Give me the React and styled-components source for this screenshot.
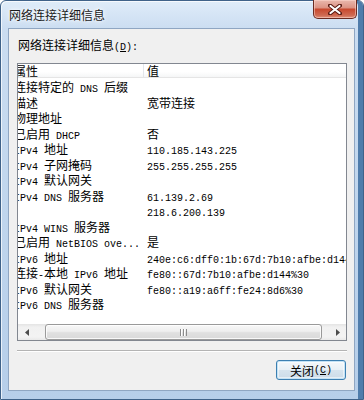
import React from "react";
import styled, { createGlobalStyle } from "styled-components";

const GlobalStyle = createGlobalStyle`
  html, body { margin: 0; padding: 0; background: #ffffff; }
  body { font-family: "Noto Sans CJK SC", "Noto Sans", sans-serif; color: #000; }
  * { box-sizing: border-box; }
`;

const Window = styled.div`
  width: 364px;
  height: 400px;
  display: flex;
  flex-direction: column;
  padding: 0 8px 9px 7px;
  border: 1px solid #3f6289;
  border-radius: 6px 6px 0 0;
  background: linear-gradient(180deg, #dfecf9 0%, #cbddf1 28px, #bfd5ed 55%, #b6cee9 100%);
  box-shadow: inset -5px 0 0 #4f7cab, inset 1px 1px 0 rgba(255,255,255,0.7);
`;

const TitleBar = styled.div`
  height: 27px;
  display: flex;
  justify-content: space-between;
  align-items: flex-start;
  flex-shrink: 0;
`;

const TitleText = styled.div`
  margin-top: 6px;
  margin-left: 1px;
  font-size: 12px;
  line-height: 16px;
  color: #1b1b1b;
  text-shadow: 0 0 6px #ffffff, 0 0 3px #ffffff;
`;

const CloseButton = styled.div`
  width: 44px;
  height: 19px;
  margin-top: -1px;
  margin-right: -2px;
  display: flex;
  align-items: center;
  justify-content: center;
  border: 1px solid #6a2b22;
  border-top: none;
  border-radius: 0 0 5px 5px;
  background: linear-gradient(180deg, #eab8ad 0%, #dc9485 42%, #c8492f 52%, #cf6a52 85%, #e0917c 100%);
  box-shadow: inset 0 0 0 1px rgba(255, 220, 210, 0.5);
`;

const Client = styled.div`
  flex: 1;
  display: flex;
  flex-direction: column;
  background: #f0f0f0;
  border: 1px solid #8fa6c2;
  padding: 8px 7px 10px 8px;
`;

const Label = styled.div`
  height: 16px;
  line-height: 16px;
  font-size: 12px;
  padding-left: 1px;
  white-space: nowrap;
`;

const Lat = styled.span`
  font-family: "Liberation Mono", monospace;
  font-size: 10px;
  white-space: pre;
`;

const ListBox = styled.div`
  margin-top: 10px;
  width: 330px;
  height: 278px;
  border: 1px solid #828790;
  background: #ffffff;
  display: flex;
  flex-direction: column;
  overflow: hidden;
`;

const Header = styled.div`
  height: 14px;
  flex-shrink: 0;
  display: flex;
  margin-left: -4px;
  border-bottom: 1px solid #e5e5e5;
  background: linear-gradient(180deg, #ffffff 0%, #ffffff 60%, #f5f6f7 100%);
  font-size: 12px;
  line-height: 13px;
`;

const HeaderCell = styled.div`
  width: ${(p) => p.$w || "auto"};
  flex: ${(p) => (p.$w ? "0 0 auto" : "1")};
  padding-left: ${(p) => p.$pad || 0}px;
  border-right: ${(p) => (p.$divider ? "1px solid #e3e6ea" : "none")};
  white-space: nowrap;
`;

const Rows = styled.div`
  flex: 1;
  padding-top: 1px;
  margin-left: -4px;
  overflow: hidden;
`;

const Row = styled.div`
  display: grid;
  grid-template-columns: 133px max-content;
  height: 15.5px;
  line-height: 15.5px;
  font-size: 12px;
  white-space: nowrap;
`;

const Cell = styled.div`
  white-space: nowrap;
`;

const HScroll = styled.div`
  height: 16px;
  flex-shrink: 0;
  display: flex;
  align-items: stretch;
  background: linear-gradient(180deg, #e4e4e4 0%, #f1f1f1 20%, #f3f3f3 80%, #e9e9e9 100%);
`;

const ArrowButton = styled.div`
  width: 17px;
  display: flex;
  align-items: center;
  justify-content: center;
`;

const Track = styled.div`
  flex: 1;
  display: flex;
  align-items: stretch;
  padding: 0 7px 0 10px;
`;

const Thumb = styled.div`
  flex: 1;
  margin: 0;
  border: 1px solid #9a9a9a;
  border-radius: 3px;
  background: linear-gradient(180deg, #f8f8f8 0%, #eeeeee 45%, #e0e0e0 55%, #d9d9d9 100%);
  box-shadow: inset 0 0 0 1px rgba(255, 255, 255, 0.8);
  display: flex;
  align-items: center;
  justify-content: center;
`;

const Grip = styled.div`
  width: 7px;
  height: 7px;
  background: repeating-linear-gradient(90deg, #8c8c8c 0, #8c8c8c 1px, #ffffff 1px, #ffffff 2px, transparent 2px, transparent 3px);
`;

const Separator = styled.div`
  margin-top: 9px;
  width: 330px;
  height: 2px;
  border-top: 1px solid #b4b4b4;
  border-bottom: 1px solid #ffffff;
`;

const ButtonRow = styled.div`
  margin-top: 8px;
  display: flex;
  justify-content: flex-end;
  padding-right: 1px;
`;

const Button = styled.div`
  width: 70px;
  height: 20px;
  display: flex;
  align-items: center;
  justify-content: center;
  font-size: 12px;
  border: 1px solid #3c7fb1;
  border-radius: 3px;
  background: linear-gradient(180deg, #f4f8fb 0%, #e8f0f6 48%, #d6e4ee 52%, #cbdbe8 100%);
  box-shadow: inset 0 0 0 1px #c4e3f6, inset 0 0 0 2px rgba(255,255,255,0.5);
`;

const ASCII = /^[\x20-\x7e]+$/;

const Mixed = ({ text }) =>
  text
    .split(/([\x20-\x7e]+)/)
    .filter(Boolean)
    .map((part, i) =>
      ASCII.test(part) ? <Lat key={i}>{part}</Lat> : <span key={i}>{part}</span>
    );

const rows = [
  ["连接特定的 DNS 后缀", ""],
  ["描述", "宽带连接"],
  ["物理地址", ""],
  ["已启用 DHCP", "否"],
  ["IPv4 地址", "110.185.143.225"],
  ["IPv4 子网掩码", "255.255.255.255"],
  ["IPv4 默认网关", ""],
  ["IPv4 DNS 服务器", "61.139.2.69"],
  ["", "218.6.200.139"],
  ["IPv4 WINS 服务器", ""],
  ["已启用 NetBIOS ove...", "是"],
  ["IPv6 地址", "240e:c6:dff0:1b:67d:7b10:afbe:d144"],
  ["连接-本地 IPv6 地址", "fe80::67d:7b10:afbe:d144%30"],
  ["IPv6 默认网关", "fe80::a19:a6ff:fe24:8d6%30"],
  ["IPv6 DNS 服务器", ""],
];

const CloseGlyph = () => (
  <svg width="14" height="11" viewBox="0 0 14 11">
    <path d="M2 1.5 L12 9.5 M12 1.5 L2 9.5" stroke="#5a1a12" strokeWidth="4" strokeLinecap="round" />
    <path d="M2.5 2 L11.5 9 M11.5 2 L2.5 9" stroke="#ffffff" strokeWidth="2.2" strokeLinecap="round" />
  </svg>
);

const LeftArrow = () => (
  <svg width="4" height="7" viewBox="0 0 4 7">
    <path d="M4 0 L0 3.5 L4 7 Z" fill="#4d4d4d" />
  </svg>
);

const RightArrow = () => (
  <svg width="4" height="7" viewBox="0 0 4 7">
    <path d="M0 0 L4 3.5 L0 7 Z" fill="#4d4d4d" />
  </svg>
);

export default function App() {
  return (
    <>
      <GlobalStyle />
      <Window>
        <TitleBar>
          <TitleText>网络连接详细信息</TitleText>
          <CloseButton>
            <CloseGlyph />
          </CloseButton>
        </TitleBar>
        <Client>
          <Label>
            网络连接详细信息<Lat>(<u>D</u>):</Lat>
          </Label>
          <ListBox>
            <Header>
              <HeaderCell $w="130px" $divider>属性</HeaderCell>
              <HeaderCell $pad={3}>值</HeaderCell>
            </Header>
            <Rows>
              {rows.map(([k, v], i) => (
                <Row key={i}>
                  <Cell><Mixed text={k} /></Cell>
                  <Cell><Mixed text={v} /></Cell>
                </Row>
              ))}
            </Rows>
            <HScroll>
              <ArrowButton><LeftArrow /></ArrowButton>
              <Track>
                <Thumb><Grip /></Thumb>
              </Track>
              <ArrowButton><RightArrow /></ArrowButton>
            </HScroll>
          </ListBox>
          <Separator />
          <ButtonRow>
            <Button>
              关闭<Lat>(<u>C</u>)</Lat>
            </Button>
          </ButtonRow>
        </Client>
      </Window>
    </>
  );
}
